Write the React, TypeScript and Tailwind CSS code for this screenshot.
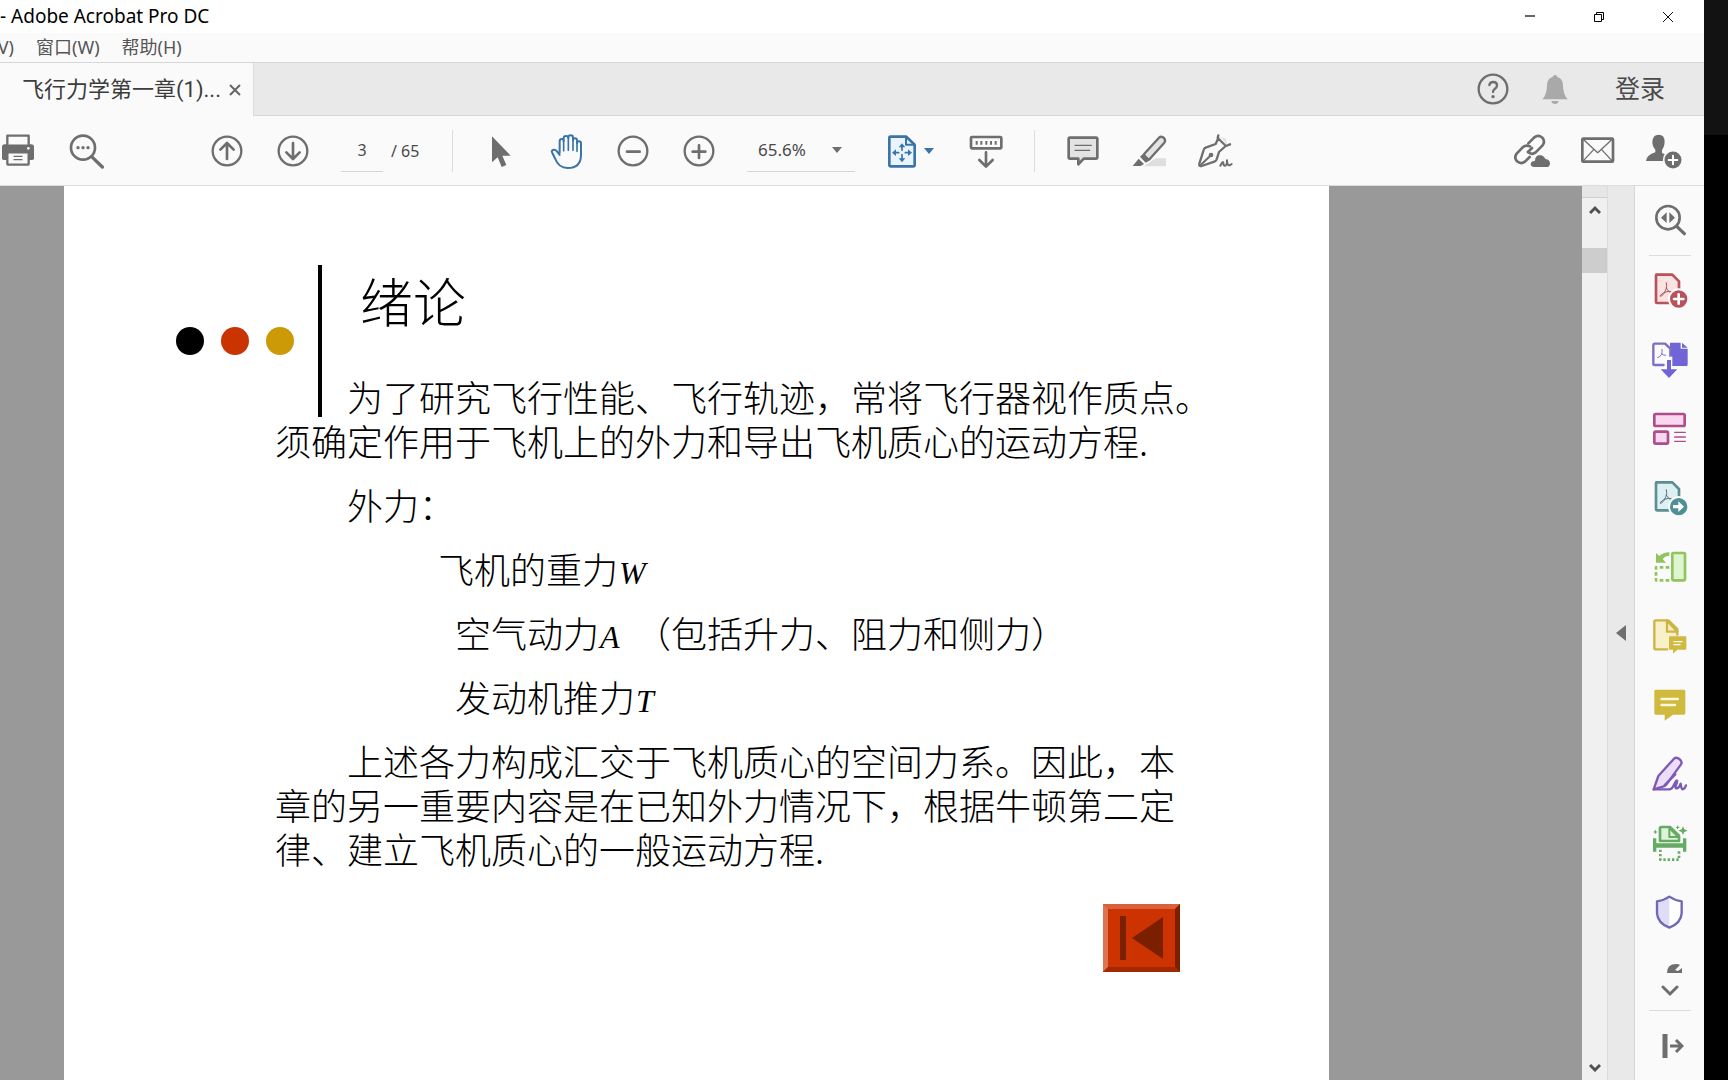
import type { ReactNode } from 'react';

const GREY = '#6e6e6e';

function Icon({ children, className = 'size-9' }: { children: ReactNode; className?: string }) {
  return (
    <svg viewBox="0 0 108 108" fill="none" strokeLinecap="round" strokeLinejoin="round" className={`shrink-0 ${className}`} aria-hidden="true">
      {children}
    </svg>
  );
}

function IconButton({ label, children }: { label: string; children: ReactNode }) {
  return (
    <button type="button" aria-label={label} className="flex size-9 shrink-0 items-center justify-center">
      <Icon>{children}</Icon>
    </button>
  );
}

function Divider() {
  return <div className="h-[42px] w-px shrink-0 bg-[#dcdcdc]" />;
}

function TitleBar() {
  return (
    <header className="flex h-[33px] items-center justify-between bg-white">
      <h1 className="whitespace-nowrap text-[19px] text-black">- Adobe Acrobat Pro DC</h1>
      <div className="flex gap-[33px] pr-[18px]">
        <button type="button" aria-label="最小化" className="flex size-9 items-center justify-center">
          <svg viewBox="0 0 12 12" className="size-3" fill="none" stroke="#666" strokeWidth="2"><path d="M1 5h10" /></svg>
        </button>
        <button type="button" aria-label="还原" className="flex size-9 items-center justify-center">
          <svg viewBox="0 0 12 12" className="size-3" fill="none" stroke="#000"><path d="M1.500 3.500h7v7h-7zM3.500 3.500v-2h7v7h-2" /></svg>
        </button>
        <button type="button" aria-label="关闭" className="flex size-9 items-center justify-center">
          <svg viewBox="0 0 12 12" className="size-3" fill="none" stroke="#111"><path d="M1 1l10 10M11 1L1 11" /></svg>
        </button>
      </div>
    </header>
  );
}

function MenuBar() {
  return (
    <nav className="flex h-[30px] items-center overflow-hidden whitespace-nowrap border-b border-[#d6d6d6] bg-[#fafafa] text-[18px] text-[#555]">
      <button type="button" aria-label="视图(V)" className="flex w-[14px] shrink-0 justify-end overflow-hidden">
        V)
      </button>
      <button type="button" className="ml-[22px]">窗口(W)</button>
      <button type="button" className="ml-[22px]">帮助(H)</button>
    </nav>
  );
}

function TabBar() {
  return (
    <div className="flex h-[53px] items-stretch justify-between border-b border-[#d6d6d6] bg-[#e9e9e9]">
      <div className="-mb-px flex w-[254px] items-center border-r border-[#dcdcdc] bg-[#fafafa] pl-[22px]">
        <button type="button" className="whitespace-nowrap font-['Roboto','Noto_Sans_CJK_SC',sans-serif] text-[22px] text-[#3c3c3c]">
          飞行力学第一章(1)...
        </button>
        <button type="button" aria-label="关闭标签" className="ml-auto mr-3">
          <svg viewBox="0 0 12 12" className="size-3" fill="none" stroke="#666" strokeWidth="2"><path d="M1 1l10 10M11 1L1 11" /></svg>
        </button>
      </div>
      <div className="flex items-center pr-[39px]">
        <IconButton label="帮助">
          <circle cx="54" cy="54" r="43" stroke={GREY} strokeWidth="7" />
          <path d="M43 42q2-9 12-9 11 0 11 10 0 6-6 10-6 4-6 10" stroke={GREY} strokeWidth="7" />
          <circle cx="54" cy="77" r="5" fill={GREY} />
        </IconButton>
        <span className="w-[26px]" />
        <IconButton label="通知">
          <path d="M54 12q6 0 7 6 16 4 17 24 0 28 14 43H16q14-15 14-43 1-20 17-24 1-6 7-6zM43 90h22q-2 9-11 9t-11-9z" fill="#a9a9a9" />
        </IconButton>
        <button type="button" className="ml-[42px] text-[25px] text-[#4a4a4a]">登录</button>
      </div>
    </div>
  );
}

function Toolbar() {
  return (
    <div className="flex h-[70px] items-center border-b border-[#dcdcdc] bg-[#fafafa] pr-[22px] text-[#4a4a4a]">
      <div className="flex gap-8">
        <IconButton label="打印">
          <path d="M6 42q0-8 8-8h80q8 0 8 8v34q0 5-5 5H11q-5 0-5-5z" fill={GREY} />
          <path d="M22 34V8h64v26" fill="#fafafa" stroke={GREY} strokeWidth="7" />
          <rect x="22" y="58" width="64" height="37" rx="3" fill="#fafafa" stroke={GREY} strokeWidth="7" />
          <path d="M42 70h24M42 80h24" stroke={GREY} strokeWidth="4" />
          <circle cx="85" cy="46" r="4" fill="#fafafa" />
        </IconButton>
        <IconButton label="查找">
          <circle cx="45" cy="44" r="36" stroke={GREY} strokeWidth="8" />
          <path d="M71 71l32 31" stroke={GREY} strokeWidth="10" />
          <path d="M30 44h.1M45 44h.1M60 44h.1" stroke={GREY} strokeWidth="10" />
        </IconButton>
      </div>
      <div className="ml-[105px] flex items-center gap-[30px]">
        <IconButton label="上一页">
          <circle cx="54" cy="54" r="43" stroke={GREY} strokeWidth="7" />
          <path d="M54 78V32M34 50l20-20 20 20" stroke={GREY} strokeWidth="8" />
        </IconButton>
        <IconButton label="下一页">
          <circle cx="54" cy="54" r="43" stroke={GREY} strokeWidth="7" />
          <path d="M54 30v46M34 58l20 20 20-20" stroke={GREY} strokeWidth="8" />
        </IconButton>
        <div className="flex items-center gap-2 text-[16px]">
          <input aria-label="页码" defaultValue="3" className="h-[42px] w-[42px] border-b border-[#d6d6d6] bg-transparent text-center outline-none" />
          <span className="w-[31px] whitespace-nowrap">/ 65</span>
        </div>
        <Divider />
        <IconButton label="选择工具">
          <path d="M27 10v78l17-15 12 29 14-6-12-28h25z" fill={GREY} />
        </IconButton>
        <IconButton label="手形工具">
          <path
            d="M32 60V24q0-6 6-6t6 6v-8q0-7 7-7t7 7v-2q0-7 7-7t7 7v8q0-6 6-6t6 6v9q0-6 6-6t6 6v34q0 40-40 40-27 0-37-27Q14 68 10 60q-4-7 2-9 7-2 12 4l8 11"
            stroke="#3a74a8"
            strokeWidth="6"
          />
          <path d="M44 24v29M58 16v36M72 22v30M84 31v24" stroke="#3a74a8" strokeWidth="5" />
        </IconButton>
        <IconButton label="缩小">
          <circle cx="54" cy="54" r="43" stroke={GREY} strokeWidth="7" />
          <path d="M36 56h38" stroke={GREY} strokeWidth="8" />
        </IconButton>
        <IconButton label="放大">
          <circle cx="54" cy="54" r="43" stroke={GREY} strokeWidth="7" />
          <path d="M35 56h38M54 37v38" stroke={GREY} strokeWidth="8" />
        </IconButton>
        <div className="grid h-[42px] w-[108px] grid-cols-1 items-center border-b border-[#d6d6d6]">
          <select aria-label="缩放比例" className="col-start-1 row-start-1 h-[41px] appearance-none bg-transparent pl-[11px] text-[17px] outline-none">
            <option>65.6%</option>
            <option>100%</option>
          </select>
          <svg viewBox="0 0 12 8" className="pointer-events-none col-start-1 row-start-1 mr-3 h-2 w-3 justify-self-end" fill={GREY}><path d="M1 1h10L6 7z" /></svg>
        </div>
        <button type="button" aria-label="页面适合方式" className="flex items-center gap-[2px]">
          <Icon>
            <path d="M16 11h48l25 24v60q0 5-5 5H18q-5 0-5-5V15q0-4 3-4z" fill="#eaf4fc" stroke="#3a74a8" strokeWidth="8" />
            <path d="M63 13v22h24" stroke="#3a74a8" strokeWidth="6" />
            <path d="M51 38v14M51 65v14M29 59h12M61 59h12" stroke="#3a74a8" strokeWidth="5" />
            <path d="M51 31l10 12H41zM51 88l10-12H41zM21 59l12-10v20zM81 59L69 49v20z" fill="#3a74a8" />
          </Icon>
          <svg viewBox="0 0 12 8" className="mr-[3px] h-2 w-3" fill="#3a74a8"><path d="M1 1h10L6 7z" /></svg>
        </button>
        <IconButton label="阅读模式">
          <rect x="9" y="12" width="91" height="34" rx="3" stroke={GREY} strokeWidth="8" />
          <path d="M26 24v11M40 24v11M55 24v11M69 24v11M83 24v11" stroke={GREY} strokeWidth="6" strokeLinecap="butt" />
          <path d="M54 58v42M34 81l20 20 20-20" stroke={GREY} strokeWidth="8" />
        </IconButton>
        <Divider />
        <IconButton label="添加注释">
          <path d="M15 14h78q4 0 4 4v55q0 4-4 4H56L40 94V77H15q-4 0-4-4V18q0-4 4-4z" fill="#e3e3e3" stroke={GREY} strokeWidth="8" />
          <path d="M30 37h49M30 52h44" stroke={GREY} strokeWidth="4" />
        </IconButton>
        <IconButton label="高亮文本">
          <path d="M44 96l30-20h31v24H40z" fill="#dedede" />
          <path d="M84 14q7-6 15 1 6 7 1 14L58 76q-6 6-14-2-8-7-2-14z" fill="#e3e3e3" stroke={GREY} strokeWidth="7" />
          <path d="M38 61l20 20-14 8-17-18zM23 77l16 16-10 6H5z" fill={GREY} />
        </IconButton>
        <IconButton label="签名">
          <path d="M70 12l22 24-6-20z" fill="#e3e3e3" />
          <path d="M64 7l-2 8 25 24 12-5M64 15L56 33 26 44q-5 2-6 7L7 92q-2 9 7 7l38-13q5-2 7-7l7-22 20-18" stroke={GREY} strokeWidth="7" />
          <path d="M12 95l28-27M70 98q9-16 9-8t5 8q6 0 6-16 0 16 8 15l6-4" stroke={GREY} strokeWidth="6" />
          <circle cx="42" cy="66" r="7" fill={GREY} />
        </IconButton>
      </div>
      <div className="ml-auto flex gap-[30px]">
        <IconButton label="共享链接">
          <g stroke={GREY} strokeWidth="8">
            <path d="M43 31l18-18q12-9 24 1 10 12 0 24L65 58q-12 9-23-1" />
            <path d="M48 40q-12-6-22 3L8 62q-9 12 1 23 12 10 24 1l14-14" />
            <path d="M42 57l12-12" />
          </g>
          <path d="M60 104q-12-1-12-11 1-10 13-11 1-16 15-18 14 0 19 12 15 2 15 16-1 12-13 12z" fill={GREY} stroke="#fafafa" strokeWidth="4" />
        </IconButton>
        <IconButton label="发送邮件">
          <rect x="7" y="17" width="92" height="69" rx="3" stroke={GREY} strokeWidth="8" />
          <path d="M11 20l42 39 42-39M11 82l30-32M95 82L65 50" stroke={GREY} strokeWidth="4" />
        </IconButton>
        <IconButton label="邀请他人">
          <path d="M38 5q18 0 18 22 0 14-8 25v8q27 9 28 24H0q2-18 28-26v-8Q19 41 19 27 20 5 38 5z" fill={GREY} />
          <circle cx="81" cy="81" r="28" fill={GREY} stroke="#fafafa" strokeWidth="5" />
          <path d="M81 68v26M68 81h26" stroke="#fff" strokeWidth="6" />
        </IconButton>
      </div>
    </div>
  );
}

const linePara = 'whitespace-nowrap leading-[44px]';

function Variable({ children }: { children: string }) {
  return <var className="inline-block w-[18px] pl-px font-['Liberation_Serif',serif] text-[32px] leading-none">{children}</var>;
}

function Slide() {
  return (
    <article className="flex min-w-0 flex-1 flex-col bg-white pt-[79px] font-['Noto_Sans_CJK_SC',sans-serif] font-light text-black">
      <div className="flex h-[152px] items-center pl-[112px]">
        <div className="flex gap-[17px]">
          <span className="size-7 rounded-full bg-black" />
          <span className="size-7 rounded-full bg-[#c93400]" />
          <span className="size-7 rounded-full bg-[#cb9a06]" />
        </div>
        <div className="ml-6 h-full w-1 bg-black" />
        <h2 className="ml-[38px] self-start text-[53px] font-light leading-[70px]">绪论</h2>
      </div>
      <div className="-mt-[43px] flex flex-col gap-5 pl-[211px] text-[36px]">
        <p className={`${linePara} indent-[72px]`}>
          为了研究飞行性能、飞行轨迹，常将飞行器视作质点。<br />须确定作用于飞机上的外力和导出飞机质心的运动方程.
        </p>
        <p className={`${linePara} pl-[72px]`}>外力：</p>
        <p className={`${linePara} pl-[163px]`}>飞机的重力<Variable>W</Variable></p>
        <p className={`${linePara} pl-[180px]`}>空气动力<Variable>A</Variable><span className="inline-block w-[18px]" />（包括升力、阻力和侧力）</p>
        <p className={`${linePara} pl-[180px]`}>发动机推力<Variable>T</Variable></p>
        <p className={`${linePara} indent-[72px]`}>
          上述各力构成汇交于飞机质心的空间力系。因此，本<br />章的另一重要内容是在已知外力情况下，根据牛顿第二定<br />律、建立飞机质心的一般运动方程.
        </p>
      </div>
      <button type="button" aria-label="返回首页" className="mr-[149px] mt-[34px] h-[68px] w-[77px] self-end">
        <svg viewBox="0 0 77 68" className="size-full" aria-hidden="true">
          <path d="M0 0h77v68H0z" fill="#cc3300" />
          <path d="M0 0h77l-5 5H5z" fill="#d9623d" />
          <path d="M0 0l5 5v58l-5 5z" fill="#de7351" />
          <path d="M77 0v68l-5-5V5z" fill="#7a1f00" />
          <path d="M0 68l5-5h67l5 5z" fill="#a32900" />
          <path d="M17 12h6v44h-6zM60 13v42L29 34z" fill="#7a1f00" />
        </svg>
      </button>
    </article>
  );
}

function ScrollBar() {
  return (
    <div className="flex w-[25px] shrink-0 flex-col items-center bg-[#f0f0f0]">
      <div className="h-3 w-full border-b border-[#d0d0d0] bg-[#e6e6e6]" />
      <button type="button" aria-label="向上滚动" className="mt-[6px]">
        <svg viewBox="0 0 12 12" className="size-3" fill="none" stroke="#505050" strokeWidth="3"><path d="M1 9l5-5 5 5" /></svg>
      </button>
      <div className="mt-8 h-[25px] w-full bg-[#cdcdcd]" />
      <button type="button" aria-label="向下滚动" className="mb-[6px] mt-auto">
        <svg viewBox="0 0 12 12" className="size-3" fill="none" stroke="#505050" strokeWidth="3"><path d="M1 3l5 5 5-5" /></svg>
      </button>
    </div>
  );
}

function PdfMark({ color }: { color: string }) {
  return (
    <path d="M43 29q3 12-1 20-6 15-13 20-6 3-4-2 8-10 24-12 9-1 14 4M43 45q3 8 12 14" stroke={color} strokeWidth="3" />
  );
}

function ToolPane() {
  return (
    <aside className="flex w-[70px] shrink-0 flex-col items-center border-l border-[#d6d6d6] bg-[#fafafa] pt-4">
      <IconButton label="搜索工具">
        <circle cx="48" cy="47" r="35" stroke={GREY} strokeWidth="8" />
        <path d="M74 73l23 22" stroke={GREY} strokeWidth="10" />
        <path d="M44 31v32L27 47zM52 31v32l17-16z" fill={GREY} />
      </IconButton>
      <div className="mt-[17px] h-px w-[42px] bg-[#dcdcdc]" />
      <div className="mt-[17px] flex flex-col gap-[33px]">
        <IconButton label="创建 PDF">
          <path d="M13 5h48l20 20v62q0 3-3 3H15q-3 0-3-3V8q0-3 3-3z" fill="#fbe3e2" stroke="#b9525c" strokeWidth="8" />
          <PdfMark color="#a35560" />
          <circle cx="80" cy="78" r="29" fill="#b9525c" stroke="#fafafa" strokeWidth="6" />
          <path d="M80 64v28M66 78h28" stroke="#fff" strokeWidth="8" />
        </IconButton>
        <IconButton label="导出 PDF">
          <path d="M54 2h32v18h21v48q0 4-4 4H54zM90 2l17 15H90z" fill="#7164d6" />
          <path d="M35 69H8q-4 0-4-4V9q0-4 4-4h31l16 15v24" fill="#fafafa" stroke="#7b6fc4" strokeWidth="7" />
          <path d="M30 22q2 10-2 16-5 8-11 9M28 34q4 7 13 6" stroke="#7b6fc4" strokeWidth="3" />
          <path d="M41 44h20v36H41z" fill="#fafafa" />
          <path d="M45 54h12v28h19L51 108 26 82h19z" fill="#7164d6" />
        </IconButton>
        <IconButton label="编辑 PDF">
          <rect x="7" y="9" width="91" height="36" rx="4" fill="#f9d7ee" stroke="#b04c8c" strokeWidth="8" />
          <rect x="7" y="62" width="41" height="36" rx="4" fill="#f9d7ee" stroke="#b04c8c" strokeWidth="8" />
          <path d="M68 64h32M68 78h32M68 91h32" stroke="#b04c8c" strokeWidth="4" />
        </IconButton>
        <IconButton label="发送以供审阅">
          <path d="M13 7h48l20 20v61q0 3-3 3H15q-3 0-3-3V10q0-3 3-3z" fill="#dceff3" stroke="#5c8f92" strokeWidth="8" />
          <PdfMark color="#5d7480" />
          <circle cx="80" cy="80" r="29" fill="#4f9094" stroke="#fafafa" strokeWidth="6" />
          <path d="M63 75h16V64l17 16-17 16V85H63z" fill="#fff" />
        </IconButton>
        <IconButton label="组织页面">
          <rect x="61" y="12" width="38" height="82" rx="3" fill="#def5cf" stroke="#90c45c" strokeWidth="8" />
          <path d="M12 12l10 9q12-11 30-11v10q-12 0-20 10l10 11H12z" fill="#90c45c" />
          <path d="M52 55H12v39h40" stroke="#90c45c" strokeWidth="8" strokeDasharray="11 7" strokeLinecap="butt" />
        </IconButton>
        <IconButton label="添加注释并发送">
          <path d="M46 94H11q-4 0-4-4V11q0-4 4-4h38l27 26v17" fill="#f8f0c8" stroke="#cdb443" strokeWidth="7" />
          <path d="M45 8v33h31z" fill="#f8f0c8" stroke="#cdb443" strokeWidth="7" />
          <path d="M54 55h46q3 0 3 3v34q0 3-3 3H76l-13 12V95h-9q-3 0-3-3V58q0-3 3-3z" fill="#cfb93e" />
          <path d="M66 71h24M66 80h18" stroke="#fff" strokeWidth="4" />
        </IconButton>
        <IconButton label="注释">
          <path d="M11 8h85q4 0 4 4v67q0 4-4 4H63l-25 18V83H11q-4 0-4-4V12q0-4 4-4z" fill="#cfb93e" />
          <path d="M29 36h48M29 54h40" stroke="#fff9dc" strokeWidth="8" />
        </IconButton>
        <IconButton label="填写和签名">
          <path d="M66 8q7-6 16 1 10 8 5 16L43 86q-3 4-8 5L5 100l14-40z" fill="#eedcfb" stroke="#7d5bb5" strokeWidth="7" />
          <path d="M38 87l32-32M5 100h46q10 0 16-16 6-12 8-10 2 2-3 13-4 12 3 10 8-3 11-14 2 20 8 16 5-2 8-11" stroke="#7d5bb5" strokeWidth="7" />
        </IconButton>
        <IconButton label="扫描和 OCR">
          <path d="M24 48V10q0-4 4-4h26l27 26v16z" fill="#ddf3da" stroke="#66ab63" strokeWidth="8" />
          <path d="M52 9v27h27z" fill="#ddf3da" stroke="#66ab63" strokeWidth="6" />
          <path d="M3 40h10v15h80V40h10v40H93V68H13v12H3z" fill="#66ab63" />
          <path d="M25 74v30h56V74" stroke="#66ab63" strokeWidth="8" strokeDasharray="7 6" strokeLinecap="butt" />
          <path d="M93 4l4 9 10 4-10 4-4 9-4-9-10-4 10-4zM77 0l2 5 5 2-5 2-2 5-2-5-5-2 5-2zM10 13l2 6 5 2-5 2-2 5-2-5-5-2 5-2z" fill="#66ab63" />
        </IconButton>
        <IconButton label="保护">
          <path d="M52 8q17 13 37 14v36q-2 29-37 43-35-14-37-43V22q20-1 37-14z" fill="#fff" />
          <path d="M52 8v93Q17 87 15 58V22q20-1 37-14z" fill="#dfdcf8" />
          <path d="M52 8q17 12 37 14v36q-2 29-37 43-35-14-37-43V22q20-2 37-14z" stroke="#7068b4" strokeWidth="7" />
        </IconButton>
      </div>
      <div className="mt-8 h-3 overflow-hidden pl-[10px]">
        <svg viewBox="0 0 18 12" className="h-3 w-[18px]" fill={GREY}><path d="M1 11q0-9 9-9 3 0 4 1L9 8l3 1 4-3v5z" /></svg>
      </div>
      <button type="button" aria-label="更多工具" className="mt-[11px]">
        <svg viewBox="0 0 18 12" className="h-3 w-[18px]" fill="none" stroke={GREY} strokeWidth="3" strokeLinecap="round"><path d="M2 2l7 7 7-7" /></svg>
      </button>
      <div className="mt-[13px] h-px w-[42px] shrink-0 bg-[#dcdcdc]" />
      <button type="button" aria-label="折叠工具窗格" className="ml-[6px] mt-[22px]">
        <svg viewBox="0 0 22 26" className="h-[26px] w-[22px]" fill="none" stroke={GREY}><path d="M3 1v24" strokeWidth="5" /><path d="M8 13h11M14 7l6 6-6 6" strokeWidth="3" /></svg>
      </button>
    </aside>
  );
}

export default function App() {
  return (
    <div className="flex h-screen overflow-hidden bg-black font-['Noto_Sans','Noto_Sans_CJK_SC',sans-serif]">
      <div className="flex min-w-0 flex-1 flex-col">
        <TitleBar />
        <MenuBar />
        <TabBar />
        <Toolbar />
        <main className="flex min-h-0 flex-1 bg-[#999]">
          <div className="w-16 shrink-0" />
          <Slide />
          <div className="w-[253px] shrink-0" />
          <ScrollBar />
          <button type="button" aria-label="隐藏工具窗格" className="flex w-[27px] shrink-0 items-center justify-center border-l border-[#dcdcdc] bg-[#e9e9e9]">
            <svg viewBox="0 0 10 16" className="h-4 w-[10px]" fill={GREY}><path d="M10 0v16L0 8z" /></svg>
          </button>
          <ToolPane />
        </main>
      </div>
      <div className="w-6 shrink-0 bg-black">
        <div className="h-[135px] bg-[#121212]" />
      </div>
    </div>
  );
}
